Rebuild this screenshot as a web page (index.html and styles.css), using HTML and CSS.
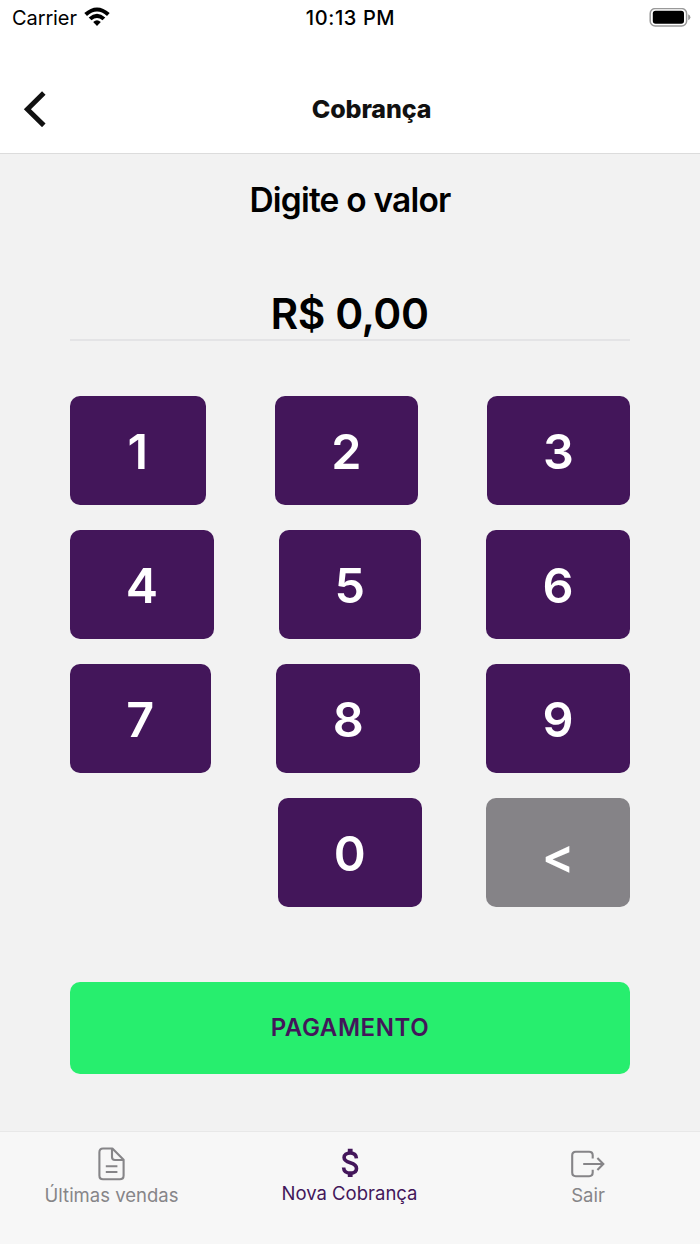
FILE: index.html
```html
<!DOCTYPE html>
<html lang="pt-BR">

  <head>
    <meta charset="UTF-8">
    <meta name="viewport" content="width=device-width, initial-scale=1.0">
    <title>Cobrança</title>
    <link rel="stylesheet" href="styles.css">
  </head>

  <body>
    <div class="status-bar">
      <div class="status-left">
        <span class="carrier">Carrier</span>
        <svg class="wifi" width="26" height="20" viewBox="0 0 26 20">
          <path d="M0.3 6.1 Q13 -5.3 25.7 6.1 L23 8.9 Q13 0.2 3 8.9 Z"/>
          <path d="M4.7 10.5 Q13 3.1 21.3 10.5 L18.5 13.2 Q13 8.6 7.5 13.2 Z"/>
          <path d="M9.2 15 Q13 11.7 16.8 15 L13 18.9 Z"/>
        </svg>
      </div>
      <span class="clock">10:13 PM</span>
      <div class="status-right">
        <svg class="battery" width="42" height="20" viewBox="0 0 42 20">
          <rect x="1.2" y="0.6" width="36.4" height="17.4" rx="5" fill="none" stroke="#999" stroke-width="1.5"/>
          <rect x="3.8" y="2.8" width="31.2" height="13" rx="2.8" fill="#000"/>
          <path d="M39.2 6.3 Q41.4 7.5 41.4 9.3 Q41.4 11.1 39.2 12.3 Z" fill="#999"/>
        </svg>
      </div>
    </div>

    <header class="header">
      <button class="back-button" aria-label="Voltar">
        <svg width="24" height="36" viewBox="0 0 24 36">
          <path d="M20.8 2 L4.4 18.2 L20.8 34.4" fill="none" stroke="#111" stroke-width="5"/>
        </svg>
      </button>
      <h1>Cobrança</h1>
    </header>

    <main class="content">
      <h2>Digite o valor</h2>
      <div class="amount">R$ 0,00</div>

      <div class="keypad">
        <div class="key-row">
          <button class="key key-1">1</button>
          <button class="key key-2">2</button>
          <button class="key key-3">3</button>
        </div>
        <div class="key-row">
          <button class="key key-4">4</button>
          <button class="key key-5">5</button>
          <button class="key key-6">6</button>
        </div>
        <div class="key-row">
          <button class="key key-7">7</button>
          <button class="key key-8">8</button>
          <button class="key key-9">9</button>
        </div>
        <div class="key-row">
          <span class="key-empty"></span>
          <button class="key key-0">0</button>
          <button class="key key-delete">&lt;</button>
        </div>
      </div>

      <button class="pay-button">PAGAMENTO</button>
    </main>

    <nav class="tab-bar">
      <a class="tab">
        <svg width="34" height="34" viewBox="0 0 34 34" fill="none" stroke="currentColor" stroke-width="2.1" stroke-linejoin="round">
          <path d="M8 1.5 H17.4 L28.6 12.8 V28.4 Q28.6 32.2 24.8 32.2 H8 Q4.4 32.2 4.4 28.4 V5.3 Q4.4 1.5 8 1.5 Z"/>
          <path d="M17 1.8 V10 Q17 13 20 13 H28.4"/>
          <path d="M10.8 19.2 H22.4 M10.8 25 H22.4"/>
        </svg>
        <span>Últimas vendas</span>
      </a>
      <a class="tab active">
        <svg width="34" height="32" viewBox="0 0 34 32" fill="none" stroke="currentColor" stroke-width="3.6">
          <path d="M17.2 1.7 V6 M17.2 26 V30" stroke-width="4.8"/>
          <path d="M23.4 11.3 C23.2 7.6 20.6 6 17.2 6 C13.6 6 11.1 7.7 11.1 10.5 C11.1 13.4 13.4 14.6 17.3 15.8 C21.4 17 23.5 18.4 23.5 21.4 C23.5 24.4 21 26.1 17.3 26.1 C13.4 26.1 10.8 24.3 10.6 20.5"/>
        </svg>
        <span>Nova Cobrança</span>
      </a>
      <a class="tab">
        <svg width="34" height="34" viewBox="0 0 34 34" fill="none" stroke="currentColor" stroke-width="2.1">
          <path d="M21.7 11.5 V8.3 Q21.7 4.7 18.1 4.7 H4.8 Q1.2 4.7 1.2 8.3 V25.6 Q1.2 29.2 4.8 29.2 H18.1 Q21.7 29.2 21.7 25.6 V22.7"/>
          <path d="M12.2 17 H32.3 M26.4 11.1 L32.3 17 L26.4 22.9"/>
        </svg>
        <span>Sair</span>
      </a>
    </nav>
  </body>

</html>
```

FILE: styles.css
```css
* {
  box-sizing: border-box;
}

body {
  margin: 0;
  height: 1244px;
  display: flex;
  flex-direction: column;
  background-color: #f2f2f2;
  color: #000;
  font-family: 'Inter', sans-serif;
  overflow: hidden;
}

button {
  border: none;
  padding: 0;
  font-family: inherit;
  cursor: pointer;
}

/* Status bar */
.status-bar {
  height: 36px;
  display: grid;
  grid-template-columns: 1fr auto 1fr;
  align-items: center;
  padding: 0 9px 1px 12px;
  background-color: #fff;
  font-size: 20px;
  line-height: 24px;
}

.status-left {
  display: flex;
  align-items: center;
  gap: 7px;
}

.carrier {
  letter-spacing: -0.1px;
}

.wifi {
  margin-bottom: 2px;
}

.clock {
  margin-left: -2px;
  font-weight: 500;
  letter-spacing: 0.6px;
}

.status-right {
  display: flex;
  justify-content: flex-end;
}

/* Header */
.header {
  height: 118px;
  display: grid;
  grid-template-columns: 70px 1fr 27px;
  align-items: center;
  padding-top: 28px;
  background-color: #fff;
  border-bottom: 1px solid #dcdcdc;
}

.back-button {
  display: flex;
  padding-left: 23px;
  background: none;
}

h1 {
  margin: 0;
  color: #111;
  font-size: 25px;
  font-weight: 800;
  letter-spacing: -0.1px;
  text-align: center;
}

/* Content */
.content {
  flex-grow: 1;
  padding: 0 70px;
}

h2 {
  margin: 26px 0 0;
  font-size: 33.5px;
  line-height: 40px;
  font-weight: 600;
  letter-spacing: -0.8px;
  text-align: center;
}

.amount {
  margin-top: 66px;
  height: 55px;
  padding-right: 1px;
  border-bottom: 2px solid #e4e4e6;
  font-size: 42.5px;
  line-height: 56px;
  font-weight: 600;
  letter-spacing: -0.5px;
  text-align: center;
}

/* Keypad */
.keypad {
  margin-top: 55px;
  display: flex;
  flex-direction: column;
  gap: 24.6px;
}

.key-row {
  display: flex;
  justify-content: space-between;
}

.key {
  width: 144px;
  height: 109.4px;
  padding-top: 1px;
  border-radius: 10px;
  background-color: #43165a;
  color: #fff;
  font-size: 48.5px;
  font-weight: 600;
}

.key-1 { width: 135.7px; }
.key-2 { width: 142.7px; }
.key-3 { width: 143px; }
.key-4 { width: 143.7px; }
.key-5 { width: 142.7px; }
.key-7 { width: 140.5px; }
.key-0 { width: 144.7px; }

.key-empty {
  width: 143.7px;
}

.key-delete {
  padding-top: 5px;
  background-color: #858387;
}

.pay-button {
  width: 100%;
  height: 92px;
  margin-top: 74.6px;
  border-radius: 10px;
  background-color: #27ee6e;
  color: #43165a;
  font-size: 24px;
  font-weight: 600;
  letter-spacing: 0.6px;
}

/* Tab bar */
.tab-bar {
  height: 113px;
  display: grid;
  grid-template-columns: 223px 1fr 224px;
  padding-top: 15px;
  background-color: #f7f7f7;
  border-top: 1px solid #e8e8e8;
}

.tab {
  display: flex;
  flex-direction: column;
  align-items: center;
  color: #868588;
  font-size: 18.5px;
  line-height: 24px;
  letter-spacing: 0;
}

.tab span {
  margin-top: 2px;
}

.tab.active {
  color: #43165a;
}
```
